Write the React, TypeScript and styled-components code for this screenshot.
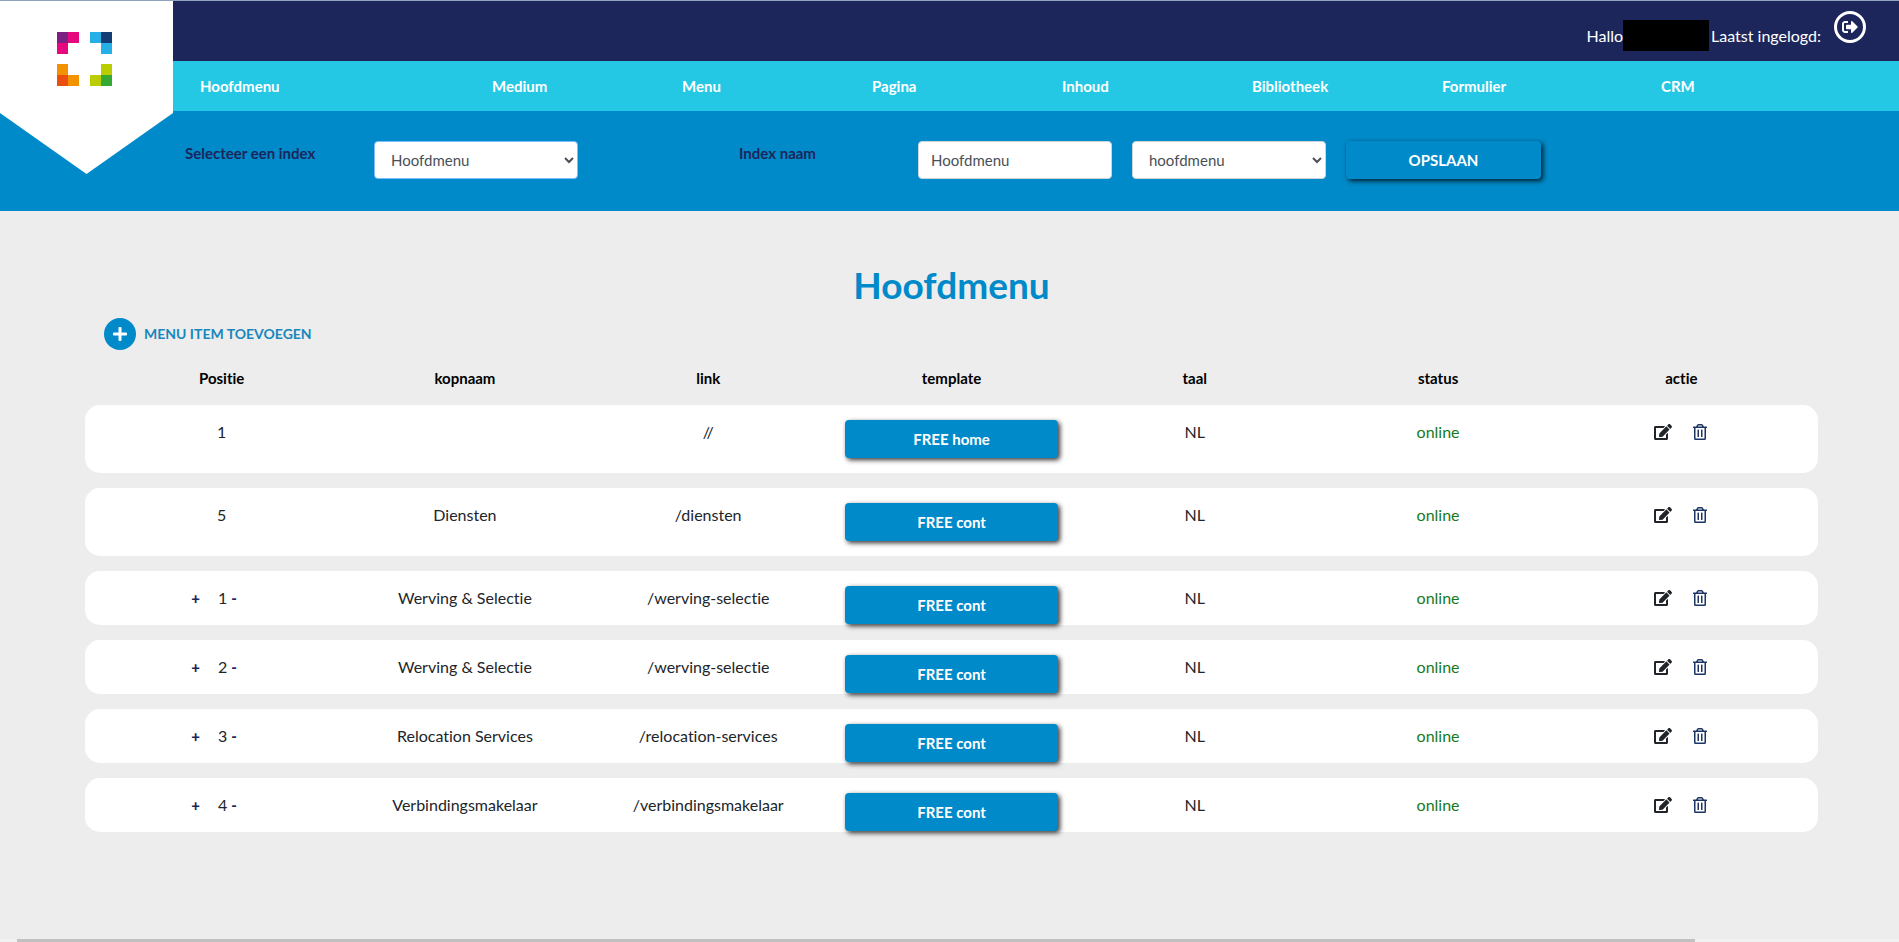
import React from 'react';
import styled, { createGlobalStyle, css } from 'styled-components';
import { FaEdit, FaPlus, FaRegTrashAlt, FaSignOutAlt } from 'react-icons/fa';

const GlobalStyle = createGlobalStyle`
  *, *::before, *::after { box-sizing: border-box; }
  body {
    margin: 0;
    background: #ededed;
    color: #212529;
    font-family: Lato, 'Liberation Sans', sans-serif;
    font-size: 16px;
    line-height: 24px;
    font-variant-ligatures: none;
  }
  button, input, select { font: inherit; }
  a { color: inherit; text-decoration: none; }
`;

const Page = styled.div`
  display: flex;
  flex-direction: column;
  min-height: 100vh;
`;

const Header = styled.header`
  position: relative;
  border-top: 1px solid #8fa3bf;
  background: #008ac9;
`;

const LogoFlag = styled.a`
  position: absolute;
  z-index: 1;
  top: 0;
  left: 0;
  display: flex;
  justify-content: center;
  width: 173px;
  height: 173px;
  padding: 31px 4px 0 0;
  background: #fff;
  clip-path: polygon(0 0, 100% 0, 100% 112px, 50% 100%, 0 112px);
`;

const TopBar = styled.div`
  display: flex;
  justify-content: flex-end;
  align-items: flex-start;
  height: 60px;
  padding: 10px 33px 0 0;
  background: #1c265b;
  color: #fff;
`;

const Greeting = styled.p`
  display: flex;
  align-items: center;
  margin: 9px 13px 0 0;
`;

const NameMask = styled.span`
  width: 86px;
  height: 31px;
  margin-right: 2px;
  background: #000;
`;

const LogoutButton = styled.button`
  display: flex;
  align-items: center;
  justify-content: center;
  width: 32px;
  height: 32px;
  padding: 0;
  border: 3px solid #fff;
  border-radius: 50%;
  background: transparent;
  color: #fff;
  font-size: 16px;
`;

const Nav = styled.nav`
  display: grid;
  grid-template-columns: 292fr repeat(5, 190fr) 219fr 238fr;
  align-items: center;
  height: 50px;
  padding-left: 200px;
  background: #25c8e4;
  color: #fff;
  font-size: 15px;
  font-weight: 700;
`;

const NavItem = styled.a`
  justify-self: start;
`;

const IndexForm = styled.form`
  display: grid;
  grid-template-columns: 169fr 204fr 121fr 159fr 194fr 194fr 195fr 338fr;
  column-gap: 20px;
  align-items: start;
  height: 100px;
  padding: 30px 0 0 185px;
`;

const FieldLabel = styled.label`
  color: #1c265b;
  font-size: 15px;
  font-weight: 700;
  white-space: nowrap;
`;

const control = css`
  width: 100%;
  height: 38px;
  border: 1px solid #ced4da;
  border-radius: 4px;
  background: #fff;
  color: #495057;
  font-size: 15px;
`;

const TextField = styled.input`
  ${control}
  padding: 6px 12px;
`;

const SelectField = styled.select<{ $focused?: boolean }>`
  ${control}
  padding: 6px 0 6px 12px;
  ${({ $focused }) => $focused && css`border-color: #80bdff;`}
`;

const PrimaryButton = styled.button`
  display: block;
  width: 100%;
  height: 38px;
  padding: 0 12px;
  border: 0;
  border-radius: 4px;
  background: #008ac9;
  box-shadow: 2px 2px 5px rgba(0, 0, 0, 0.8);
  color: #fff;
  font-size: 15px;
  font-weight: 700;
`;

const Main = styled.main`
  flex: 1;
  padding: 47px 81px 60px 85px;
`;

const Title = styled.h1`
  margin: 0;
  color: #008ac9;
  font-size: 37px;
  line-height: 54px;
  font-weight: 700;
  text-align: center;
`;

const AddItem = styled.a`
  display: inline-flex;
  align-items: center;
  gap: 8px;
  margin: 6px 0 0 19px;
  color: #1787bd;
  font-size: 14px;
  font-weight: 700;
`;

const AddBadge = styled.span`
  display: flex;
  align-items: center;
  justify-content: center;
  width: 32px;
  height: 32px;
  border-radius: 50%;
  background: #008ac9;
  color: #fff;
  font-size: 16px;
`;

const MenuTable = styled.table`
  display: block;
  margin-top: 16px;
  text-align: center;

  thead, tbody { display: block; }
`;

const Row = styled.tr`
  display: grid;
  grid-template-columns: repeat(7, 1fr);
  padding: 0 15px;
`;

const ItemRow = styled(Row)<{ $child?: boolean }>`
  margin-top: 15px;
  padding: 15px;
  height: ${({ $child }) => ($child ? 54 : 68)}px;
  border-radius: 15px;
  background: #fff;
`;

const HeadCell = styled.th`
  padding: 0;
  color: #000;
  font-size: 15px;
  font-weight: 700;
`;

const Cell = styled.td`
  height: 24px;
  padding: 0 15px;
`;

const Status = styled.span`
  color: #187a18;
`;

const Position = styled.span`
  display: flex;
  justify-content: center;
  padding-right: 15px;
`;

const MoveButton = styled.button`
  padding: 0 4px;
  border: 0;
  background: transparent;
  color: #1c265b;
  font-size: 15px;
  font-weight: 900;

  &:first-child { margin-right: 14px; }
`;

const Actions = styled.span`
  display: flex;
  justify-content: center;
  gap: 19px;
  padding: 4px 0;
`;

const IconButton = styled.button<{ $color: string }>`
  display: flex;
  padding: 0;
  border: 0;
  background: transparent;
  color: ${({ $color }) => $color};

  svg { width: 18px; height: 16px; }
`;

const ScrollTrack = styled.div`
  height: 3px;
  padding: 0 204px 0 17px;
  background: #f1f1f1;
`;

const ScrollThumb = styled.div`
  height: 100%;
  background: #c1c1c1;
`;

const logoCells: [number, number, string][] = [
  [0, 0, '#7b2182'], [1, 0, '#e6097e'], [0, 1, '#e6097e'],
  [3, 0, '#27b0e8'], [4, 0, '#153d75'], [4, 1, '#27b0e8'],
  [0, 3, '#f39200'], [0, 4, '#ea4e10'], [1, 4, '#f39200'],
  [4, 3, '#b9cd00'], [3, 4, '#b9cd00'], [4, 4, '#36a935'],
];

const navItems = ['Hoofdmenu', 'Medium', 'Menu', 'Pagina', 'Inhoud', 'Bibliotheek', 'Formulier', 'CRM'];
const columns = ['Positie', 'kopnaam', 'link', 'template', 'taal', 'status', 'actie'];

interface MenuItem {
  position: number;
  name: string;
  link: string;
  template: string;
  child?: boolean;
}

const items: MenuItem[] = [
  { position: 1, name: '', link: '//', template: 'FREE home' },
  { position: 5, name: 'Diensten', link: '/diensten', template: 'FREE cont' },
  { position: 1, name: 'Werving & Selectie', link: '/werving-selectie', template: 'FREE cont', child: true },
  { position: 2, name: 'Werving & Selectie', link: '/werving-selectie', template: 'FREE cont', child: true },
  { position: 3, name: 'Relocation Services', link: '/relocation-services', template: 'FREE cont', child: true },
  { position: 4, name: 'Verbindingsmakelaar', link: '/verbindingsmakelaar', template: 'FREE cont', child: true },
];

function Logo() {
  return (
    <svg width="55" height="54" viewBox="0 0 5 5" preserveAspectRatio="none" shapeRendering="crispEdges" aria-hidden="true">
      {logoCells.map(([x, y, fill]) => (
        <rect key={`${x}-${y}`} x={x} y={y} width="1" height="1" fill={fill} />
      ))}
    </svg>
  );
}

function MenuRow({ item }: { item: MenuItem }) {
  return (
    <ItemRow $child={item.child}>
      <Cell>
        {item.child ? (
          <Position>
            <MoveButton type="button">+</MoveButton>
            {item.position}
            <MoveButton type="button">-</MoveButton>
          </Position>
        ) : (
          item.position
        )}
      </Cell>
      <Cell>{item.name}</Cell>
      <Cell>{item.link}</Cell>
      <Cell>
        <PrimaryButton type="button">{item.template}</PrimaryButton>
      </Cell>
      <Cell>NL</Cell>
      <Cell>
        <Status>online</Status>
      </Cell>
      <Cell>
        <Actions>
          <IconButton type="button" $color="#212529" aria-label="Bewerken">
            <FaEdit />
          </IconButton>
          <IconButton type="button" $color="#1c3565" aria-label="Verwijderen">
            <FaRegTrashAlt />
          </IconButton>
        </Actions>
      </Cell>
    </ItemRow>
  );
}

export default function App() {
  return (
    <Page>
      <GlobalStyle />
      <Header>
        <LogoFlag href="#" aria-label="Home">
          <Logo />
        </LogoFlag>
        <TopBar>
          <Greeting>
            Hallo
            <NameMask />
            Laatst ingelogd:
          </Greeting>
          <LogoutButton type="button" aria-label="Uitloggen">
            <FaSignOutAlt />
          </LogoutButton>
        </TopBar>
        <Nav>
          {navItems.map((label) => (
            <NavItem key={label} href="#">{label}</NavItem>
          ))}
        </Nav>
        <IndexForm onSubmit={(event) => event.preventDefault()}>
          <FieldLabel htmlFor="index">Selecteer een index</FieldLabel>
          <SelectField id="index" $focused>
            <option>Hoofdmenu</option>
          </SelectField>
          <span />
          <FieldLabel htmlFor="index-name">Index naam</FieldLabel>
          <TextField id="index-name" defaultValue="Hoofdmenu" />
          <SelectField aria-label="Type">
            <option>hoofdmenu</option>
          </SelectField>
          <PrimaryButton type="submit">OPSLAAN</PrimaryButton>
        </IndexForm>
      </Header>
      <Main>
        <Title>Hoofdmenu</Title>
        <AddItem href="#">
          <AddBadge>
            <FaPlus />
          </AddBadge>
          MENU ITEM TOEVOEGEN
        </AddItem>
        <MenuTable>
          <thead>
            <Row>
              {columns.map((label) => (
                <HeadCell key={label} scope="col">{label}</HeadCell>
              ))}
            </Row>
          </thead>
          <tbody>
            {items.map((item, index) => (
              <MenuRow key={index} item={item} />
            ))}
          </tbody>
        </MenuTable>
      </Main>
      <ScrollTrack>
        <ScrollThumb />
      </ScrollTrack>
    </Page>
  );
}
